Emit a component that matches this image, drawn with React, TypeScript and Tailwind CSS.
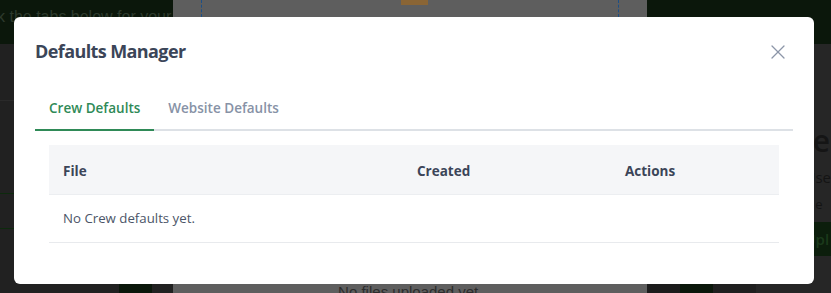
import { X } from "lucide-react";

const columns = ["File", "Created", "Actions"];

const App = () => {
  return (
    <div className="relative w-[831px] h-[293px] overflow-hidden bg-[#212121] font-['Open_Sans',sans-serif]">
      {/* page behind the dialog, seen through the dark overlay */}
      <div className="flex h-full">
        <div className="w-[173px] flex flex-col">
          <div className="h-[44px] bg-[#0b170b] overflow-hidden whitespace-nowrap">
            <p className="-ml-[3px] pt-[5px] text-[16px] text-[#2d3a2d] font-['Liberation_Sans',sans-serif]">
              k the tabs below for your co
            </p>
          </div>
          <div className="flex-1 flex flex-col">
            <div className="h-[57px] border-b border-[#2a2a2a]" />
            <div className="h-[93px] border-b border-[#0d2a0d]" />
            <div className="h-[35px] border-b border-[#0d2a0d]" />
            <div className="flex-1 flex items-end pl-[119px]">
              <div className="w-[33px] h-[10px] bg-[#0b170b]" />
            </div>
          </div>
        </div>

        <div className="w-[480px] bg-[#5e5e5e] flex flex-col">
          <div className="relative h-[17px] mx-[28px] border-x border-dashed border-[#1d4f86]">
            <div className="absolute left-[199px] top-0 w-[27px] h-[5px] bg-[#8a6535]" />
          </div>
          <div className="flex-1 flex items-end justify-center">
            <p className="text-[15px] text-[#2c2c2c] leading-[16px] translate-y-[7px] font-['Liberation_Sans',sans-serif]">
              No files uploaded yet.
            </p>
          </div>
        </div>

        <div className="flex-1 flex flex-col">
          <div className="h-[44px] bg-[#0b170b]" />
          <div className="flex-1 flex">
            <div className="w-[33px] bg-[#1c1c1c]" />
            <div className="w-[33px] bg-[#1f1f1f] flex flex-col justify-end">
              <div className="h-[10px] bg-[#0b170b]" />
            </div>
            <div className="w-[43px] bg-[#1f1f1f]" />
            <div className="flex-1 bg-[#262626] pl-[48px] pt-[80px] whitespace-nowrap overflow-hidden">
              <p className="text-[30px] leading-[34px] font-semibold text-[#151515]">ie</p>
              <p className="mt-[8px] text-[15px] text-[#141414]">Use</p>
              <p className="mt-[6px] text-[13px] text-[#141414]">e e</p>
              <div className="mt-[8px] h-[34px] bg-[#0c1e0c] text-[15px] font-semibold text-[#1b3a1b] pt-[6px]">Upl</div>
            </div>
          </div>
        </div>
      </div>

      {/* dialog */}
      <div className="absolute left-[14px] top-[17px] w-[800px] h-[267px] bg-white rounded-[6px] px-[21px] pt-[21px]">
        <div className="flex items-center justify-between">
          <h2 className="text-[18px] leading-[26px] font-bold tracking-[-0.6px] text-[#3b4558]">Defaults Manager</h2>
          <button className="mr-[3px] mt-[2px] text-[#8c96a8]">
            <X size={24} strokeWidth={1.3} />
          </button>
        </div>

        <div className="mt-[34px] flex border-b-2 border-[#dde1e6]">
          <button className="-mb-[2px] px-[14px] pb-[11px] border-b-2 border-[#2f8a57] text-[13.5px] font-semibold text-[#2f8a57]">
            Crew Defaults
          </button>
          <button className="-mb-[2px] px-[14px] pb-[11px] border-b-2 border-transparent text-[13.5px] font-semibold text-[#8792a6]">
            Website Defaults
          </button>
        </div>

        <div className="mx-[14px] mt-[14px]">
          <div className="grid grid-cols-[354px_208px_1fr] bg-[#f5f6f8] border-b border-[#eceef1] h-[50px] items-center pt-[2px]">
            {columns.map((c) => (
              <div key={c} className="px-[14px] text-[13.5px] font-bold text-[#3b4558]">
                {c}
              </div>
            ))}
          </div>
          <div className="h-[48px] flex items-center px-[14px] border-b border-[#e8eaed] text-[13.25px] text-[#4b5568] pt-[1px]">
            No Crew defaults yet.
          </div>
        </div>
      </div>
    </div>
  );
};

export default App;
